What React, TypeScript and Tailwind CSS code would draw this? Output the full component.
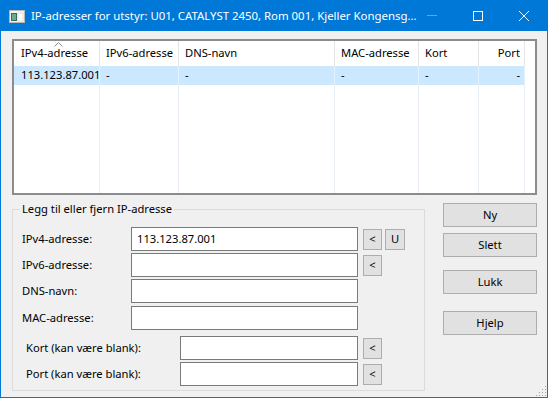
import React from 'react';

const FONT = "font-['Segoe_UI','Noto_Sans',sans-serif] text-[11.2px]";

const COLUMNS = [
  { id: 'ipv4', label: 'IPv4-adresse', value: '113.123.87.001', width: 'w-[86px]', pad: 'pl-[7px]', right: false },
  { id: 'ipv6', label: 'IPv6-adresse', value: '-', width: 'w-[79px]', pad: 'pl-[6px]', right: false },
  { id: 'dns', label: 'DNS-navn', value: '-', width: 'w-[156px]', pad: 'pl-[6px]', right: false },
  { id: 'mac', label: 'MAC-adresse', value: '-', width: 'w-[84px]', pad: 'pl-[6px]', right: false },
  { id: 'kort', label: 'Kort', value: '-', width: 'w-[60px]', pad: 'pl-[6px]', right: false },
  { id: 'port', label: 'Port', value: '-', width: 'w-[46px]', pad: 'pr-[4px]', right: true },
];

const SmallButton: React.FC<{ label: string; wide?: boolean }> = ({ label, wide }) => (
  <button
    className={`h-[21px] ${wide ? 'w-[20px]' : 'w-[19px]'} bg-[#e1e1e1] border border-[#adadad] leading-none text-black flex items-center justify-center`}
  >
    {label}
  </button>
);

const DialogButton: React.FC<{ label: string; className?: string }> = ({ label, className = '' }) => (
  <button
    className={`h-[24px] w-[94px] bg-[#e1e1e1] border border-[#adadad] text-black flex items-center justify-center ${className}`}
  >
    {label}
  </button>
);

interface FieldRowProps {
  label: string;
  value?: string;
  indent?: boolean;
  buttons?: string[];
  className?: string;
}

const FieldRow: React.FC<FieldRowProps> = ({ label, value = '', indent, buttons = [], className = '' }) => (
  <div className={`flex items-center h-[24px] ${className}`}>
    <span className={`${indent ? 'w-[167px] pl-[13px]' : 'w-[118px] pl-[9px]'} text-black whitespace-nowrap`}>
      {label}
    </span>
    <div
      className={`${indent ? 'w-[178px]' : 'w-[227px]'} h-[24px] bg-white border border-[#7a7a7a] flex items-center px-[5px] text-black`}
    >
      {value}
    </div>
    <div className="flex items-center gap-[3px] ml-[5px]">
      {buttons.map((b) => (
        <SmallButton key={b} label={b} wide={b === 'U'} />
      ))}
    </div>
  </div>
);

const WindowIcon = () => (
  <svg width="16" height="13" viewBox="0 0 16 13" className="shrink-0">
    <rect x="0.5" y="0.5" width="15" height="12" fill="#f4f4f4" stroke="#b8b8b8" />
    <rect x="2" y="3" width="6" height="8" fill="#2f6f5c" />
    <rect x="3" y="4" width="4" height="6" fill="#6da88f" />
    <rect x="9" y="3" width="5" height="8" fill="#ffffff" stroke="#c8c8c8" strokeWidth="0.5" />
  </svg>
);

const App: React.FC = () => {
  return (
    <div className={`w-[548px] h-[398px] bg-[#0078d7] flex flex-col px-[1px] pb-[1px] ${FONT}`}>
      {/* Title bar */}
      <div className="h-[31px] flex items-center text-white shrink-0">
        <div className="pl-[8px] pr-[6px] pt-[1px]">
          <WindowIcon />
        </div>
        <span className="text-[11.4px] whitespace-nowrap flex-1 min-w-0">
          IP-adresser for utstyr: U01, CATALYST 2450, Rom 001, Kjeller Kongensg...
        </span>
        <div className="flex h-full shrink-0">
          <div className="w-[46px] h-full flex items-center justify-center">
            <div className="w-[10px] h-[1px] bg-[#5aa6e6]" />
          </div>
          <div className="w-[46px] h-full flex items-center justify-center">
            <div className="w-[10px] h-[10px] border border-white" />
          </div>
          <div className="w-[46px] h-full flex items-center justify-center">
            <svg width="10" height="10" viewBox="0 0 10 10">
              <path d="M0 0 L10 10 M10 0 L0 10" stroke="white" strokeWidth="1" />
            </svg>
          </div>
        </div>
      </div>

      {/* Body */}
      <div className="relative flex-1 bg-[#f0f0f0] flex flex-col pl-[11px] pr-[10px]">
        {/* List view */}
        <div className="mt-[8px] h-[156px] border-2 border-[#8b8c8f] bg-white flex flex-col overflow-hidden">
          <div className="flex h-[25px] shrink-0">
            {COLUMNS.map((c, i) => (
              <div
                key={c.id}
                className={`relative ${c.width} ${c.pad} h-full flex items-center ${c.right ? 'justify-end' : ''} border-r border-[#e5e5e5] text-black whitespace-nowrap`}
              >
                {i === 0 && (
                  <svg width="9" height="5" viewBox="0 0 9 5" className="absolute top-[1px] left-[40px]">
                    <path d="M0.5 4.5 L4.5 0.5 L8.5 4.5" stroke="#8c8c8c" fill="none" />
                  </svg>
                )}
                {c.label}
              </div>
            ))}
          </div>
          <div className="flex h-[19px] shrink-0 bg-[#cce8ff] w-[511px]">
            {COLUMNS.map((c) => (
              <div
                key={c.id}
                className={`${c.width} ${c.pad} h-full flex items-center ${c.right ? 'justify-end' : ''} border-r border-[#e4f2ff] text-black whitespace-nowrap`}
              >
                {c.value}
              </div>
            ))}
          </div>
          <div className="flex flex-1">
            {COLUMNS.map((c) => (
              <div key={c.id} className={`${c.width} h-full border-r border-[#e8eef4]`} />
            ))}
          </div>
        </div>

        {/* Lower section */}
        <div className="mt-[6px] flex">
          <fieldset className="w-[414px] h-[190px] border border-[#dcdcdc] pb-[3px]">
            <legend className="ml-[7px] px-[2px] leading-[16px] text-black">
              Legg til eller fjern IP-adresse
            </legend>
            <div className="flex flex-col pt-[10px]">
              <FieldRow label="IPv4-adresse:" value="113.123.87.001" buttons={['<', 'U']} />
              <FieldRow label="IPv6-adresse:" buttons={['<']} className="mt-[2px]" />
              <FieldRow label="DNS-navn:" className="mt-[2px]" />
              <FieldRow label="MAC-adresse:" className="mt-[3px]" />
              <FieldRow label="Kort (kan være blank):" indent buttons={['<']} className="mt-[6px]" />
              <FieldRow label="Port (kan være blank):" indent buttons={['<']} className="mt-[2px]" />
            </div>
          </fieldset>

          <div className="ml-[18px] pt-[2px] flex flex-col">
            <DialogButton label="Ny" />
            <DialogButton label="Slett" className="mt-[6px]" />
            <DialogButton label="Lukk" className="mt-[13px]" />
            <DialogButton label="Hjelp" className="mt-[17px]" />
          </div>
        </div>

        {/* Resize grip */}
        <svg width="12" height="12" viewBox="0 0 12 12" className="absolute right-0 bottom-0">
          {[
            [10, 1], [10, 4], [7, 4], [10, 7], [7, 7], [4, 7], [10, 10], [7, 10], [4, 10], [1, 10],
          ].map(([x, y], i) => (
            <rect key={i} x={x} y={y} width="1" height="1" fill="#a0a0a0" />
          ))}
        </svg>
      </div>
    </div>
  );
};

export default App;
